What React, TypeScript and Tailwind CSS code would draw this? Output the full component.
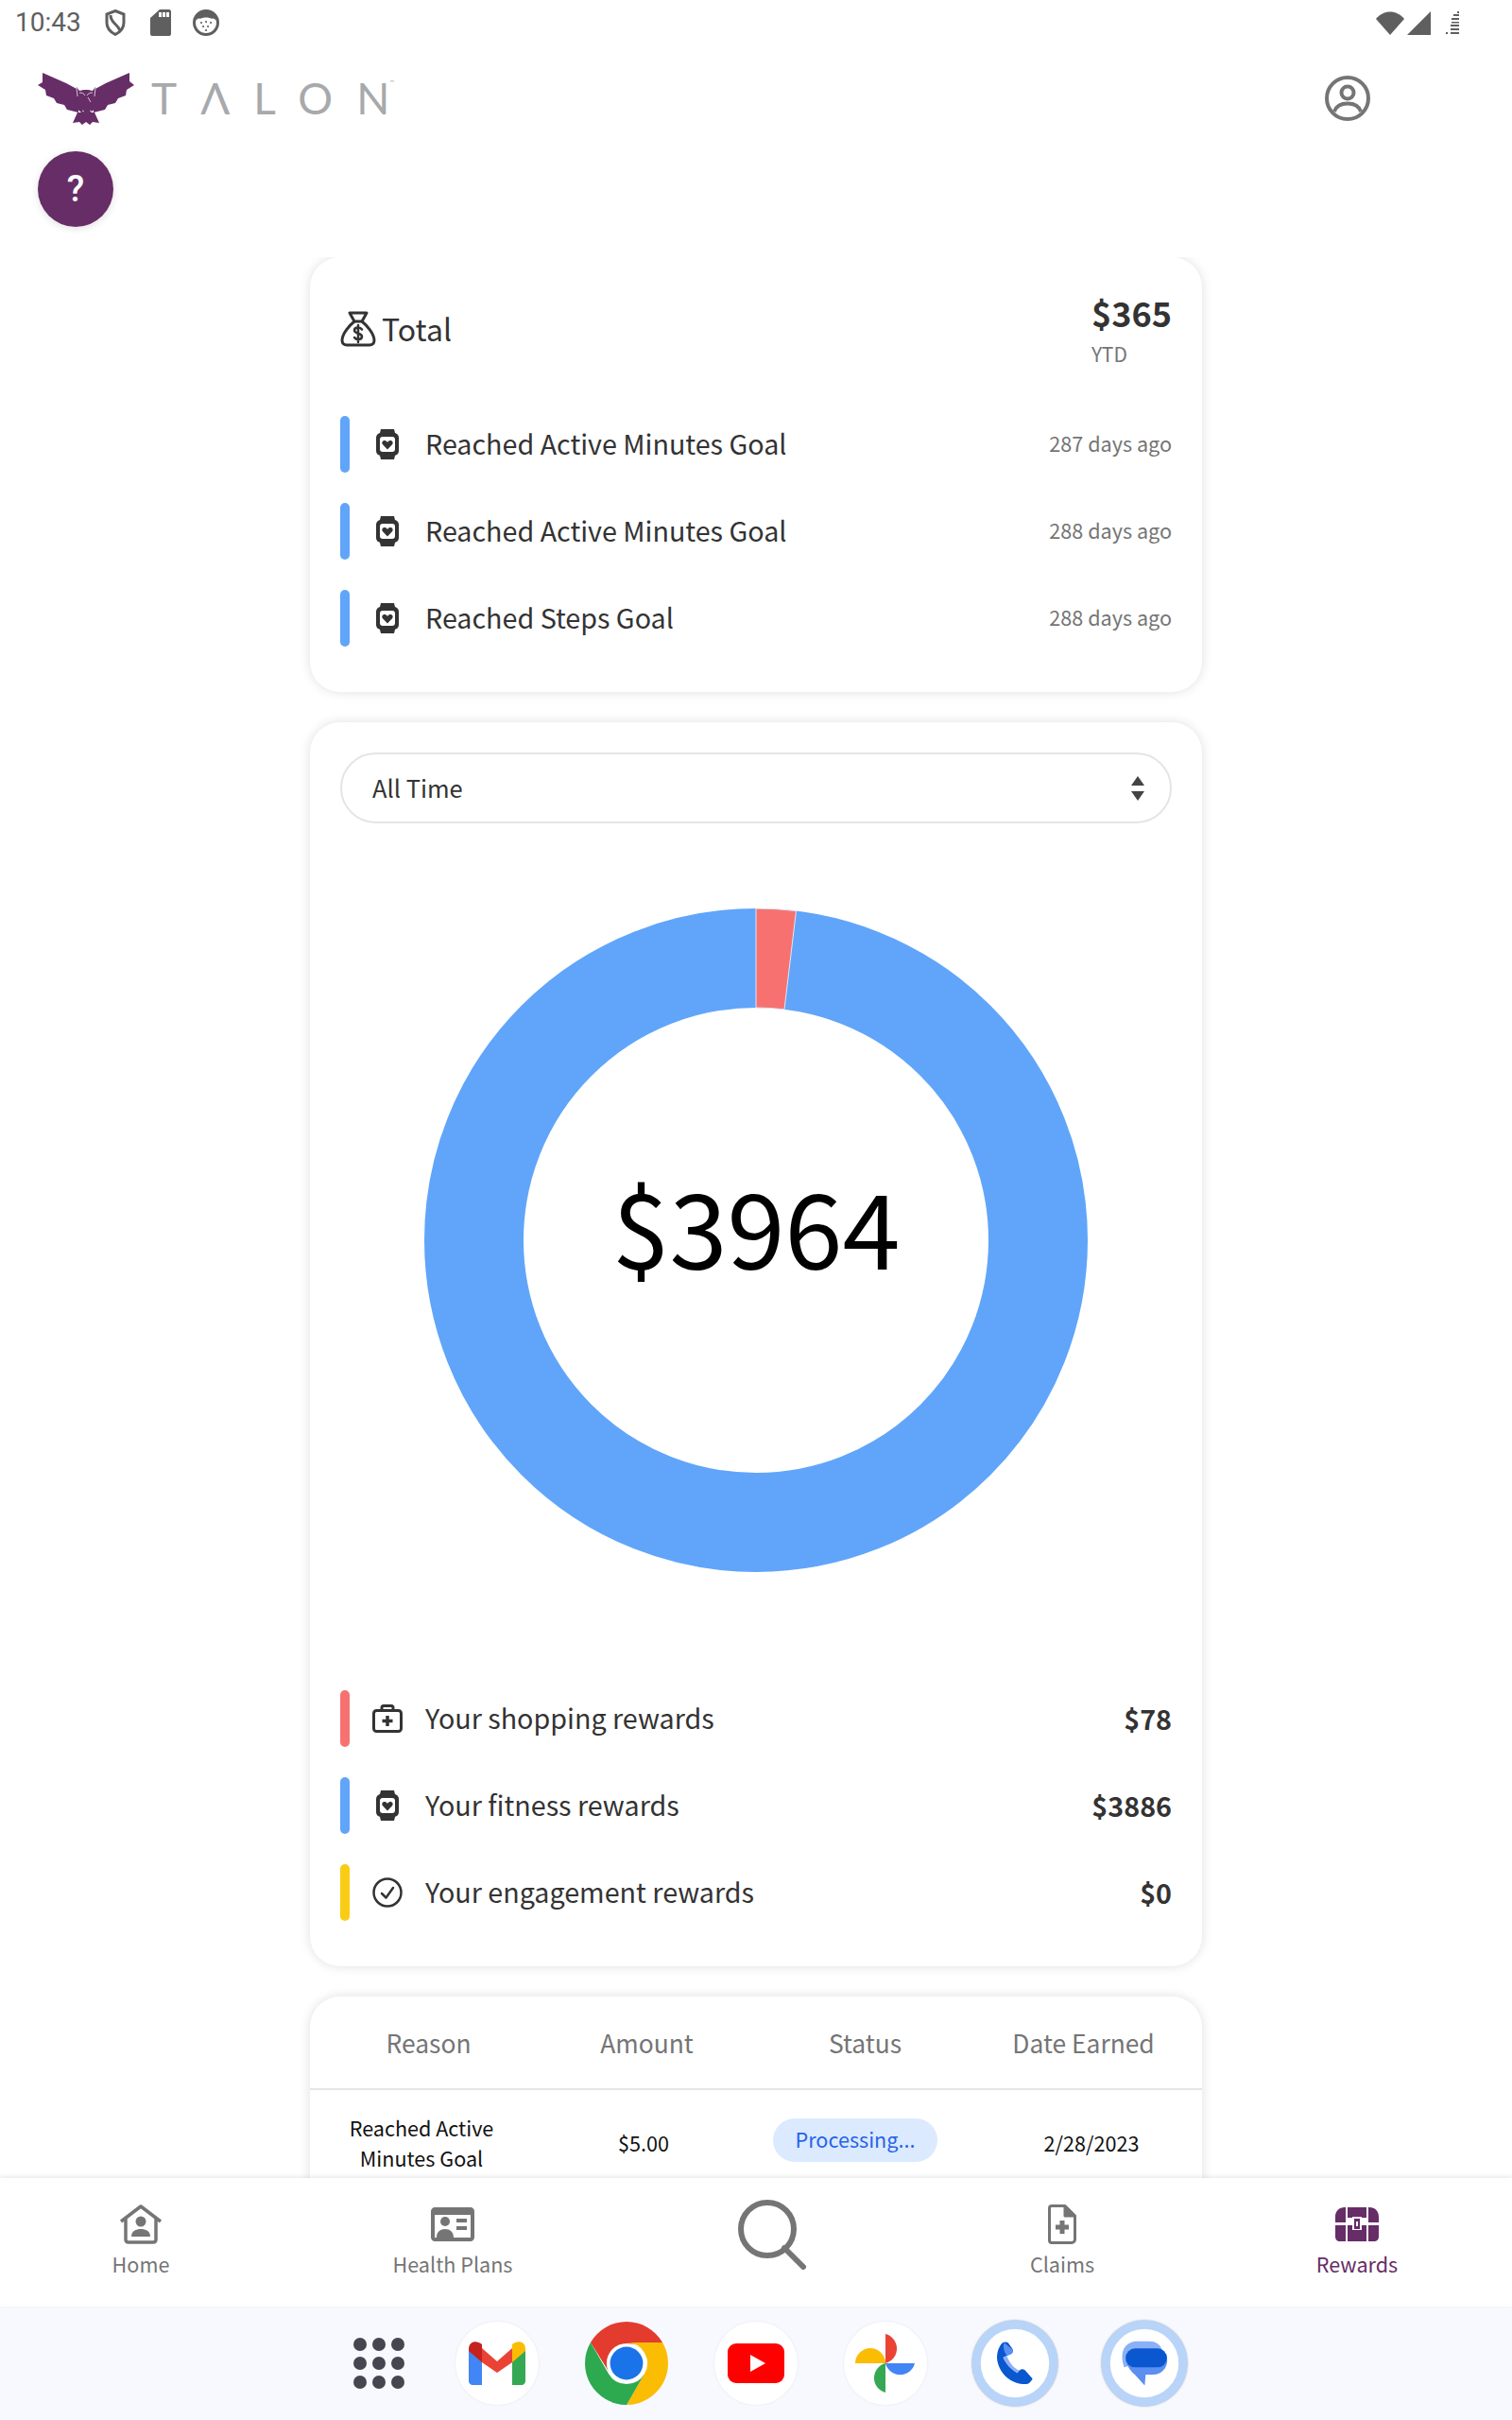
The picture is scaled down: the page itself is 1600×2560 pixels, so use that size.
import React from 'react';

const WatchIcon = () => (
  <svg width="24" height="32" viewBox="0 0 24 32">
    <path d="M5 0h14l1.500 6h-17zM3.500 26h17L19 32H5z" fill="#333" />
    <rect x="0" y="4" width="24" height="24" rx="5" fill="#333" />
    <rect x="4" y="8" width="16" height="16" rx="3" fill="#fff" />
    <path d="M12 21.500l-5-5.200c-1.700-2.200 0-4.800 2.400-4.300 1.200.2 2 1 2.600 1.900.6-.9 1.400-1.700 2.600-1.900 2.400-.5 4.100 2.100 2.400 4.300z" fill="#333" />
  </svg>
);

const BagIcon = () => (
  <svg width="38" height="38" viewBox="0 0 38 38" fill="none" stroke="#333" strokeWidth="3" strokeLinejoin="round" strokeLinecap="round">
    <path d="M10 2h18l-5 9h-8z" />
    <path d="M15 11C10 15 2 24 2 31c0 3 2 5 5 5h24c3 0 5-2 5-5 0-7-8-16-13-20" />
    <path d="M23 19.500c-1-1.500-2.500-2-4-2-2.200 0-4 1.200-4 3 0 4 8 2.500 8 6.500 0 1.800-1.800 3-4 3-1.700 0-3.200-.7-4-2M19 15v18" strokeWidth="2.500" />
  </svg>
);

const KitIcon = () => (
  <svg width="32" height="30" viewBox="0 0 32 30" fill="none" stroke="#333" strokeWidth="3" strokeLinejoin="round">
    <rect x="1.500" y="6.500" width="29" height="22" rx="3" />
    <path d="M10 6V3.500C10 2.400 10.900 1.500 12 1.500h8c1.100 0 2 .9 2 2V6" />
    <path d="M16 12v11M10.500 17.500h11" strokeWidth="3.500" />
  </svg>
);

const CheckIcon = () => (
  <svg width="32" height="32" viewBox="0 0 32 32" fill="none" stroke="#333" strokeWidth="2.500" strokeLinecap="round" strokeLinejoin="round">
    <circle cx="16" cy="16" r="14.500" />
    <path d="M10 17l4.500 4.500L22 11" />
  </svg>
);

const Owl = () => (
  <svg width="102" height="55" viewBox="0 0 102 55" fill="#662d66">
    <path d="M5 0L30 11L43 18L43 42L31 39L28 34L20 32L17 27L9 24L8 18L0 13L5 10Z" />
    <path d="M97 0L72 11L59 18L59 42L71 39L74 34L82 32L85 27L93 24L94 18L102 13L97 9Z" />
    <path d="M41 15l3 4c4-1.500 10-1.500 14 0l3-4 1 14c0 8-4 14-11 14s-11-6-11-14z" />
    <path d="M42 42h18l5 11-7-1-3 3-4-3-4 3-3-3-7 1z" />
    <path d="M44 21c3 0 5 1 6 3M58 21c-3 0-5 1-6 3M53 26l3 5M47 40l2 1M55 40l2 1M41 16l1 9M61 16l-1 9" stroke="#d8c2d8" strokeWidth="1" fill="none" />
  </svg>
);

const TotalRow = ({ label, when }: { label: string; when: string }) => (
  <div className="flex items-center">
    <div className="w-[10px] h-[60px] rounded-full bg-[#60a5fa]" />
    <div className="w-[40px] ml-[20px] flex justify-center"><WatchIcon /></div>
    <span className="ml-[20px] mb-[3px] text-[28.7px] leading-[38px] text-[#333333]">{label}</span>
    <span className="ml-auto mb-[2px] text-[21.6px] leading-[32px] text-[#757575]">{when}</span>
  </div>
);

const LegendRow = ({ color, icon, label, amount }: { color: string; icon: React.ReactNode; label: string; amount: string }) => (
  <div className="flex items-center">
    <div className={`w-[10px] h-[60px] rounded-full ${color}`} />
    <div className="w-[40px] ml-[20px] flex justify-center">{icon}</div>
    <span className="ml-[20px] mb-[2px] text-[28.7px] leading-[38px] text-[#333333]">{label}</span>
    <span className="ml-auto text-[28.7px] leading-[38px] font-bold text-[#333333]">{amount}</span>
  </div>
);

const NavItem = ({ icon, label, active }: { icon: React.ReactNode; label: string; active?: boolean }) => (
  <div className="flex flex-col items-center">
    <div className="h-[44px] flex items-center justify-center">{icon}</div>
    <span className={`mt-[5px] text-[21.6px] leading-[30px] ${active ? 'text-[#662d66]' : 'text-[#757575]'}`}>{label}</span>
  </div>
);

const AppCircle = ({ children, ring }: { children: React.ReactNode; ring?: boolean }) => (
  <div className={`w-[88px] h-[88px] flex items-center justify-center rounded-full bg-white ${ring ? 'border-[9px] border-[#b8d4f8] shadow-[0_0_2px_rgba(0,0,0,0.3)] scale-[1.035]' : 'shadow-[0_0_3px_rgba(0,0,0,0.08)]'}`}>
    {children}
  </div>
);

export default function App() {
  return (
    <div className="w-[1600px] h-[2560px] flex flex-col overflow-hidden bg-white font-['Noto_Sans_CJK_SC','Noto_Sans',sans-serif]">
      {/* Status bar */}
      <div className="h-[48px] shrink-0 flex items-center pl-[16px] text-[#5f5f5f]">
        <span className="font-['Roboto',sans-serif] text-[28px] leading-[48px] w-[95px]">10:43</span>
        <svg width="22" height="28" viewBox="0 0 22 28" fill="none" stroke="#5f5f5f" strokeWidth="3">
          <path d="M11 1.500l9 3.500v9c0 6-4 10-9 12.500C6 24 2 20 2 14V5zM6 6c0 8 6 8 10 16" />
        </svg>
        <svg className="ml-[26px]" width="22" height="28" viewBox="0 0 22 28" fill="#5f5f5f">
          <path d="M10 0h10c1 0 2 1 2 2v24c0 1-1 2-2 2H2c-1 0-2-1-2-2V9z" />
          <path d="M9 3h3v5H9zM13 3h3v5h-3zM17 3h3v5h-3z" fill="#fff" />
        </svg>
        <svg className="ml-[23px]" width="28" height="28" viewBox="0 0 28 28">
          <circle cx="14" cy="14" r="12.500" fill="#fff" stroke="#5f5f5f" strokeWidth="3" />
          <path d="M3 12C4 5 9 2 14 2s10 3 11 10c-2-2-3-3-5-2-2-2-10-2-12 0-2-1-3 0-5 2z" fill="#5f5f5f" />
          <path d="M9 14h.1M14 13h.1M19 14h.1M11 18h.1M16 18h.1M14 22h.1" stroke="#5f5f5f" strokeWidth="2" strokeLinecap="round" />
        </svg>
        <svg className="ml-auto" width="30" height="25" viewBox="0 0 30 25" fill="#5f5f5f">
          <path d="M0 8C8 -2 22 -2 30 8L15 25z" />
        </svg>
        <svg className="ml-[3px]" width="25" height="25" viewBox="0 0 25 25" fill="#5f5f5f">
          <path d="M25 0v25H0z" />
        </svg>
        <svg className="ml-[16px] mr-[56px]" width="14" height="26" viewBox="0 0 14 26" fill="#5f5f5f">
          <path d="M12 1h2v2h-2zM8 4h6v2H8zM6 8h8v2H6zM6 12h8v1.500H6zM5 15h9v2H5zM5 19h9v2H5zM5 23h9v2H5zM0 23h2v2H0z" />
        </svg>
      </div>

      {/* Header */}
      <div className="h-[64px] mt-[24px] shrink-0 flex items-center pl-[40px]">
        <Owl />
        <span className="ml-[18px] font-['Lato',sans-serif] font-normal text-[46px] leading-[64px] text-[#a7a9ac]">
          <span className="tracking-[25px]">TΛLO</span>N<span className="align-top text-[6px] leading-[30px]">™</span>
        </span>
        <svg className="ml-auto mr-[150px]" width="48" height="48" viewBox="0 0 48 48" fill="none" stroke="#757575" strokeWidth="4">
          <circle cx="24" cy="24" r="22" />
          <circle cx="24" cy="18" r="6.500" />
          <path d="M10 38c2-6 8-8.500 14-8.500S36 32 38 38" />
        </svg>
      </div>

      {/* Help */}
      <div className="mt-[24px] ml-[40px] w-[80px] h-[80px] shrink-0 rounded-full bg-[#662d66] flex items-center justify-center shadow-[0_2px_8px_rgba(0,0,0,0.12)]">
        <span className="font-['Roboto',sans-serif] font-medium text-[38px] leading-[40px] text-white">?</span>
      </div>

      {/* Cards */}
      <div className="flex-1 min-h-0 overflow-hidden mt-[32px] flex flex-col items-center gap-[32px]">
        <div className="w-[944px] shrink-0 rounded-[32px] bg-white shadow-[0_0_12px_rgba(0,0,0,0.13)] px-[32px] pt-[32px] pb-[48px]">
          <div className="h-[136px] flex items-start justify-between">
            <div className="h-[88px] flex items-center">
              <BagIcon />
              <span className="ml-[6px] mb-[2px] text-[32px] leading-[42px] text-[#333333]">Total</span>
            </div>
            <div className="flex flex-col items-start pt-[4px]">
              <span className="text-[36px] leading-[44px] font-bold text-[#333333]">$365</span>
              <span className="text-[21px] leading-[44px] text-[#757575]">YTD</span>
            </div>
          </div>
          <div className="flex flex-col gap-[32px]">
            <TotalRow label="Reached Active Minutes Goal" when="287 days ago" />
            <TotalRow label="Reached Active Minutes Goal" when="288 days ago" />
            <TotalRow label="Reached Steps Goal" when="288 days ago" />
          </div>
        </div>

        <div className="w-[944px] shrink-0 rounded-[32px] bg-white shadow-[0_0_12px_rgba(0,0,0,0.13)] px-[32px] pt-[32px] pb-[48px]">
          <div className="h-[75px] rounded-full border-2 border-[#e5e5e5] flex items-center pl-[32px] pr-[26px]">
            <span className="mb-[2px] text-[25.5px] leading-[36px] text-[#333333]">All Time</span>
            <svg className="ml-auto" width="16" height="28" viewBox="0 0 16 28" fill="#444">
              <path d="M8 1l7 10H1zM8 27l7-10H1z" />
            </svg>
          </div>
          <div className="relative mt-[90px] mb-[125px] h-[702px] flex justify-center">
            <svg width="702" height="702" viewBox="0 0 702 702">
              <circle cx="351" cy="351" r="298.500" fill="none" stroke="#60a5fa" strokeWidth="105" />
              <path d="M351 0A351 351 0 0 1 393.500 2.600L381 106.800A246 246 0 0 0 351 105Z" fill="#f87171" stroke="#dfe7f0" strokeWidth="1" />
            </svg>
            <div className="absolute inset-0 flex items-center justify-center">
              <span className="text-[110px] leading-[130px] text-black mb-[34px]">$3964</span>
            </div>
          </div>
          <div className="flex flex-col gap-[32px]">
            <LegendRow color="bg-[#f87171]" icon={<KitIcon />} label="Your shopping rewards" amount="$78" />
            <LegendRow color="bg-[#60a5fa]" icon={<WatchIcon />} label="Your fitness rewards" amount="$3886" />
            <LegendRow color="bg-[#facc15]" icon={<CheckIcon />} label="Your engagement rewards" amount="$0" />
          </div>
        </div>

        <div className="w-[944px] shrink-0 rounded-t-[32px] bg-white shadow-[0_0_12px_rgba(0,0,0,0.13)]">
          <div className="h-[99px] border-b-2 border-[#e5e5e5] grid grid-cols-4 px-[10px] items-center text-center text-[26.4px] leading-[36px] text-[#757575]">
            <span>Reason</span>
            <span>Amount</span>
            <span>Status</span>
            <span>Date Earned</span>
          </div>
          <div className="grid grid-cols-[236px_234px_214px_1fr] items-center pt-[24px] pb-[20px] text-center text-[21.6px] leading-[32px] text-[#111111]">
            <span>Reached Active<br />Minutes Goal</span>
            <span>$5.00</span>
            <div className="flex justify-center">
              <span className="mb-[6px] w-[174px] h-[46px] rounded-full bg-[#dbeafe] text-[#2563eb] text-[21.6px] leading-[44px]">Processing...</span>
            </div>
            <span className="pl-[26px]">2/28/2023</span>
          </div>
        </div>
      </div>

      {/* Bottom nav */}
      <div className="h-[136px] shrink-0 relative bg-white shadow-[0_-2px_4px_rgba(0,0,0,0.08)] grid grid-cols-[298px_362px_316px_296px_328px] pt-[27px]">
        <NavItem label="Home" icon={
          <svg width="46" height="42" viewBox="0 0 46 42" fill="none" stroke="#757575" strokeWidth="3.500" strokeLinejoin="round">
            <path d="M2 18L23 2l21 16M7 15v22c0 2 1 3 3 3h26c2 0 3-1 3-3V15" />
            <circle cx="23" cy="18" r="5.500" fill="#757575" stroke="none" />
            <path d="M13 34c0-6 5-8 10-8s10 2 10 8z" fill="#757575" stroke="none" />
          </svg>
        } />
        <NavItem label="Health Plans" icon={
          <svg width="46" height="36" viewBox="0 0 46 36" fill="#757575">
            <path fillRule="evenodd" d="M4 0h38c2 0 4 2 4 4v28c0 2-2 4-4 4H4c-2 0-4-2-4-4V4c0-2 2-4 4-4zM4 8v24h38V8z" />
            <circle cx="15" cy="15" r="5" />
            <path d="M6 32c0-6 4-9 9-9s9 3 9 9zM27 12h11v4H27zM27 20h11v4H27z" />
          </svg>
        } />
        <div className="flex justify-center -mt-[4px]">
          <svg width="74" height="74" viewBox="0 0 74 74" fill="none" stroke="#757575" strokeWidth="6" strokeLinecap="round">
            <circle cx="31" cy="31" r="28" />
            <path d="M49 51l20 20" />
          </svg>
        </div>
        <NavItem label="Claims" icon={
          <svg width="30" height="42" viewBox="0 0 30 42" fill="none" stroke="#757575" strokeWidth="3" strokeLinejoin="round">
            <path d="M4 1.500h14l10.500 10.500v25c0 2-1.500 3.500-3.500 3.500H4c-1.500 0-2.500-1-2.500-2.500V4c0-1.500 1-2.500 2.500-2.500z" />
            <path d="M18 2l10 10H18z" fill="#757575" />
            <path d="M15 17v14M8 24h14" strokeWidth="5" />
          </svg>
        } />
        <NavItem active label="Rewards" icon={
          <svg width="46" height="36" viewBox="0 0 46 36" fill="#662d66">
            <path d="M10 0h1v16H0V10c0-6 4-10 10-10zM13 0h20v11H28v-1H18v1h-5zM35 0h1c6 0 10 4 10 10v6H35zM0 19h11v17H5c-3 0-5-2-5-5zM13 19h5v5h10v-5h5v17H13zM35 19h11v12c0 3-2 5-5 5h-6z" />
            <path fillRule="evenodd" d="M20 12h6v11h-6zM22 15v5h2v-5z" />
          </svg>
        } />
      </div>

      {/* Dock */}
      <div className="h-[120px] shrink-0 bg-[#f8f9ff] flex items-center pl-[371px]">
        <svg className="mr-[51px]" width="60" height="60" viewBox="0 0 60 60" fill="#444650">
          <circle cx="10" cy="10" r="7" /><circle cx="30" cy="10" r="7" /><circle cx="50" cy="10" r="7" />
          <circle cx="10" cy="30" r="7" /><circle cx="30" cy="30" r="7" /><circle cx="50" cy="30" r="7" />
          <circle cx="10" cy="50" r="7" /><circle cx="30" cy="50" r="7" /><circle cx="50" cy="50" r="7" />
        </svg>
        <div className="flex items-center gap-[49px]">
          <AppCircle>
            <svg width="60" height="46" viewBox="0 0 60 46">
              <path d="M0 8v34c0 2 2 4 4 4h10V16z" fill="#4285f4" />
              <path d="M60 8v34c0 2-2 4-4 4H46V16z" fill="#34a853" />
              <path d="M14 7L30 21L46 7L46 22L30 33L14 22z" fill="#ea4335" />
              <path d="M0 8c0-8 8-10 14-5v19L0 10z" fill="#c5221f" />
              <path d="M60 8c0-8-8-10-14-5v19l14-12z" fill="#fbbc04" />
            </svg>
          </AppCircle>
          <svg width="88" height="88" viewBox="0 0 48 48">
            <path d="M44.780 12A24 24 0 0 0 3.220 12L14.500 30A11 11 0 0 1 24 13Z" fill="#e33b2e" />
            <path d="M44.780 12H24A12 12 0 0 1 34.400 30L24 48A24 24 0 0 0 44.780 12Z" fill="#fbbc04" />
            <path d="M24 48L34.400 30A12 12 0 0 1 13.600 30L3.220 12A24 24 0 0 0 24 48Z" fill="#2da94f" />
            <circle cx="24" cy="24" r="11.500" fill="#fff" />
            <circle cx="24" cy="24" r="9.500" fill="#1a73e8" />
          </svg>
          <AppCircle>
            <svg width="60" height="42" viewBox="0 0 60 42">
              <rect width="60" height="42" rx="9" fill="#ff0000" />
              <path d="M24 12l16 9-16 9z" fill="#fff" />
            </svg>
          </AppCircle>
          <AppCircle>
            <svg width="64" height="64" viewBox="0 0 64 64">
              <path d="M32 32V1a16 16 0 0 1 0 31z" fill="#ea4335" />
              <path d="M32 32H63a16 16 0 0 1-31 0z" fill="#4285f4" />
              <path d="M32 32v31a16 16 0 0 1 0-31z" fill="#34a853" />
              <path d="M32 32H0a16 16 0 0 1 32 0z" fill="#fbbc04" />
            </svg>
          </AppCircle>
          <AppCircle ring>
            <svg width="39" height="46" viewBox="73 80 117 136" className="mr-[2px]">
              <path d="M95 85C80 100 75 125 80 145C90 185 125 212 165 212C175 212 183 205 187 195L163 168C158 165 152 165 147 170L140 178C120 165 105 150 97 130L123 118C128 112 128 108 125 103L112 85C107 82 100 82 95 85Z" fill="#0b57d0" />
              <path d="M100 85L125 105C128 110 127 115 122 119L108 125C100 112 95 98 100 85Z" fill="#5b8ff0" />
              <path d="M97 130L108 125C115 145 130 165 147 170L140 178C120 165 105 150 97 130Z" fill="#8ab0f8" />
            </svg>
          </AppCircle>
          <AppCircle ring>
            <svg width="48" height="48" viewBox="470 80 148 144">
              <path d="M520 83H560C590 83 602 105 602 125L480 165C472 140 472 120 480 105C490 90 505 83 520 83Z" fill="#8ab0f8" />
              <path d="M484 140C490 165 505 180 514 188L545 222L548 188H570C600 188 616 165 616 143C616 125 605 110 590 105Z" fill="#5b8ff0" />
              <rect x="485" y="105" width="130" height="60" rx="30" fill="#0b57d0" />
            </svg>
          </AppCircle>
        </div>
      </div>
    </div>
  );
}
